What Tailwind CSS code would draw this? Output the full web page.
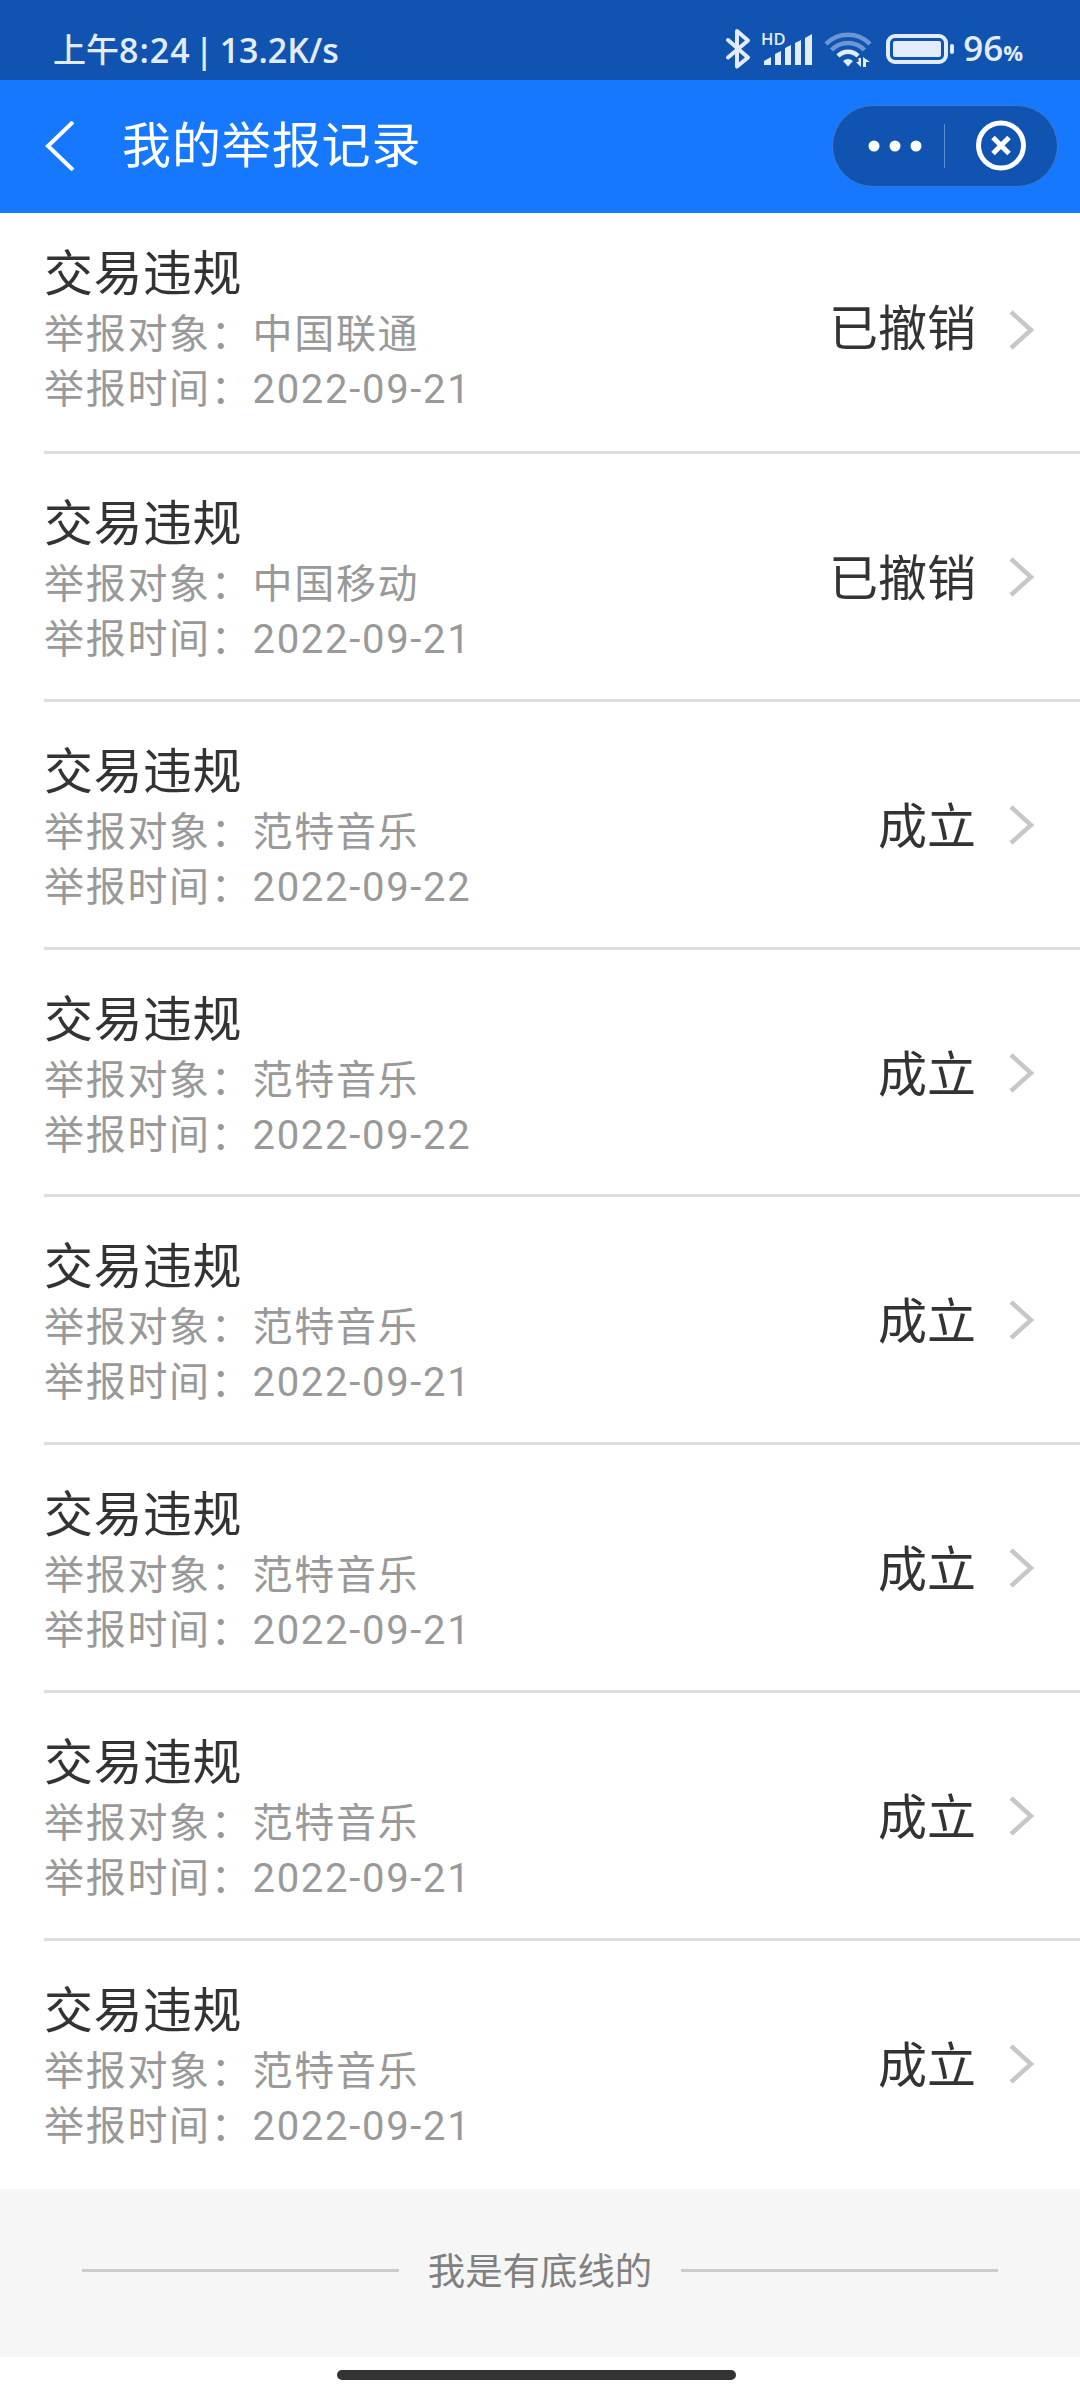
<!DOCTYPE html>
<html lang="zh-CN">
<head>
    <meta charset="UTF-8">
    <meta name="viewport" content="width=device-width, initial-scale=1.0">
    <title>我的举报记录</title>
    <script src="https://cdn.jsdelivr.net/npm/@tailwindcss/browser@4"></script>
    <style>
        body {
            font-family: Roboto, 'Noto Sans CJK SC', sans-serif;
        }
    </style>
</head>
<body class="w-[1080px] h-[2400px] bg-white overflow-hidden flex flex-col">

    <!-- Status bar -->
    <div class="h-20 shrink-0 bg-[#1053b1] text-[#e3ecfa] flex items-center justify-between pl-[53px] pr-[57px] pt-[19px]">
        <div class="font-['Open_Sans','Noto_Sans_CJK_SC',sans-serif] text-[34px] font-semibold leading-[60px] whitespace-nowrap flex">
            <span class="text-[33px] font-medium">上午</span>
            <span class="tracking-[1px]">8:24</span>
            <span class="ml-[4px] mr-[7px] w-[18px] text-center">|</span>
            <span>13.2K/s</span>
        </div>
        <div class="flex items-center">
            <svg class="w-[242px] h-[60px] shrink-0" viewBox="721 20 242 60" fill="none">
                <path d="M728 40l20 17.500-11 9V31l11 9.500-20 17" stroke="#e3ecfa" stroke-width="4" stroke-linejoin="round" stroke-linecap="round"/>
                <text x="761" y="45" font-family="Open Sans" font-size="16.500" font-weight="600" fill="#e3ecfa">HD</text>
                <path d="M764 65v-4l7-4v8zM775 65V54l6-3v14zM785 65V48l6-3v20zM795 65V43l6-3v25zM805 65V38l7-4v31z" fill="#e3ecfa"/>
                <path d="M826 44a31 31 0 0 1 44 0" stroke="#6d96d5" stroke-width="4.500"/>
                <path d="M831.500 50a23 23 0 0 1 33 0" stroke="#6d96d5" stroke-width="4.500"/>
                <path d="M838 56a14 14 0 0 1 20 0" stroke="#e3ecfa" stroke-width="4.500"/>
                <path d="M843 61q5-4 10 0l-5 5.500zM856 62h2.500v-4h2.500v9zM863 67V57l7 5h-4v5z" fill="#e3ecfa"/>
                <rect x="888" y="36" width="58" height="26" rx="7" stroke="#e3ecfa" stroke-width="4"/>
                <rect x="893" y="41" width="48" height="16" rx="2" fill="#e3ecfa"/>
                <rect x="950" y="44" width="4" height="10" rx="2" fill="#e3ecfa"/>
            </svg>
            <div class="font-['Open_Sans',sans-serif] text-[35px] font-semibold leading-[60px] whitespace-nowrap">96<span class="text-[22px] font-bold">%</span></div>
        </div>
    </div>

    <!-- Title bar -->
    <header class="h-[133px] shrink-0 bg-[#1677ff] flex items-center pl-[44px] pr-[22px] pb-[2px]">
        <svg class="w-8 h-[50px]" viewBox="0 0 32 50" fill="none">
            <path d="M29 1L4 25l25 24" stroke="#fff" stroke-width="4"/>
        </svg>
        <h1 class="ml-[46px] mt-[2px] text-[49px] leading-[72px] tracking-[0.9px] text-white">我的举报记录</h1>
        <div class="ml-auto w-[226px] h-[82px] rounded-full bg-[#1053b1] border border-[#3b79d0] flex items-center">
            <svg class="w-full h-full" viewBox="0 0 224 80" fill="none">
                <circle cx="41" cy="40" r="5.500" fill="#fff"/>
                <circle cx="62" cy="40" r="5.500" fill="#fff"/>
                <circle cx="83" cy="40" r="5.500" fill="#fff"/>
                <path d="M111.500 18v44" stroke="#5b8bd0"/>
                <circle cx="168" cy="39.500" r="22.500" stroke="#fff" stroke-width="5"/>
                <path d="M160 31.500l16 16M176 31.500l-16 16" stroke="#fff" stroke-width="5"/>
            </svg>
        </div>
    </header>

    <!-- Report list -->
    <main id="reportList"></main>

    <!-- End of list -->
    <div class="h-[168px] shrink-0 bg-[#f6f6f6] flex items-center justify-between px-[82px] pb-[2px]">
        <div class="w-[317px] h-[3px] bg-[#cccccc] -mt-[2px]"></div>
        <span class="text-[37.4px] leading-[54px] text-[#808080]">我是有底线的</span>
        <div class="w-[317px] h-[3px] bg-[#cccccc] -mt-[2px]"></div>
    </div>

    <!-- Gesture bar -->
    <div class="flex-grow flex justify-center pt-[13px]">
        <div class="w-[399px] h-[10px] rounded-full bg-[#333333] mr-[7px]"></div>
    </div>

    <script>
        const reports = [
            { target: '中国联通', date: '2022-09-21', status: '已撤销' },
            { target: '中国移动', date: '2022-09-21', status: '已撤销' },
            { target: '范特音乐', date: '2022-09-22', status: '成立' },
            { target: '范特音乐', date: '2022-09-22', status: '成立' },
            { target: '范特音乐', date: '2022-09-21', status: '成立' },
            { target: '范特音乐', date: '2022-09-21', status: '成立' },
            { target: '范特音乐', date: '2022-09-21', status: '成立' },
            { target: '范特音乐', date: '2022-09-21', status: '成立' }
        ];

        // the first row sits closer to the title bar, the last one has no divider
        document.getElementById('reportList').innerHTML = reports.map((r, i) => `
            <div class="ml-11 pr-[44px] flex items-start border-[#dddddd] ${i === 0 ? 'h-[241px] pt-[30px]' : 'h-[247.8px] pt-[39px]'} ${i === reports.length - 1 ? '' : 'border-b-[3px]'}">
                <div class="flex-grow">
                    <h2 class="text-[49px] leading-[64px] tracking-[0.5px] text-[#333333]">交易违规</h2>
                    <p class="text-[40px] leading-[55px] tracking-[1.7px] text-[#999999]">举报对象：${r.target}</p>
                    <p class="text-[40px] leading-[55px] tracking-[1.7px] text-[#999999]">举报时间：${r.date}</p>
                </div>
                <span class="mt-[55px] text-[49px] leading-[64px] text-[#333333]">${r.status}</span>
                <svg class="ml-8 w-7 h-11 ${i === 0 ? 'mt-[65px]' : 'mt-[62px]'}" viewBox="0 0 28 44" fill="none">
                    <path d="M3 4l20 18L3 40" stroke="#c7c7c7" stroke-width="4.500"/>
                </svg>
            </div>
        `).join('');
    </script>

</body>
</html>
